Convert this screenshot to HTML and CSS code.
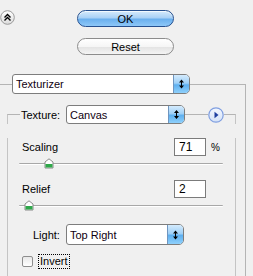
FILE: index.html
```html
<!DOCTYPE html>
<html>
<head>
<meta charset="utf-8">
<link rel="stylesheet" href="styles.css">
</head>
<body>
<div class="top">
  <div class="collapse">
    <svg width="15" height="15" viewBox="0 0 15 15">
      <defs><linearGradient id="cg" x1="0" y1="0" x2="0" y2="1"><stop offset="0" stop-color="#ffffff"/><stop offset="1" stop-color="#dcdcdc"/></linearGradient></defs>
      <circle cx="7.5" cy="7.5" r="6.8" fill="url(#cg)" stroke="#9a9a9a" stroke-width="1"/>
      <path d="M4.5 7.5 L7.5 4.5 L10.5 7.5 M4.5 10.5 L7.5 7.5 L10.5 10.5" fill="none" stroke="#000" stroke-width="1.4"/>
    </svg>
  </div>
  <div class="buttons">
    <div class="btn btn-ok">OK</div>
    <div class="btn btn-reset">Reset</div>
  </div>
</div>

<div class="outer">
  <div class="hdr outer-hdr">
    <div class="line line-left-short"></div>
    <div class="select sel-filter">
      <span class="sel-text">Texturizer</span>
      <span class="sel-arrow"><svg width="15" height="20" viewBox="0 0 15 20"><path d="M5 8.5 L7.5 5.5 L10 8.5 Z M5 11.5 L7.5 14.5 L10 11.5 Z" fill="#000"/><rect x="7" y="8" width="1" height="4" fill="#000"/></svg></span>
    </div>
    <div class="line line-right-outer"></div>
  </div>
  <div class="outer-body">
    <div class="hdr inner-hdr">
      <div class="line line-left-inner"></div>
      <span class="lbl tex-lbl">Texture:</span>
      <div class="select sel-texture">
        <span class="sel-text">Canvas</span>
        <span class="sel-arrow"><svg width="15" height="19" viewBox="0 0 15 19"><path d="M5 8 L7.5 5 L10 8 Z M5 11 L7.5 14 L10 11 Z" fill="#000"/><rect x="7" y="7.5" width="1" height="4" fill="#000"/></svg></span>
      </div>
      <div class="line line-mid"></div>
      <div class="circle-btn">
        <svg width="16" height="16" viewBox="0 0 16 16">
          <defs><linearGradient id="bg2" x1="0" y1="0" x2="0" y2="1"><stop offset="0" stop-color="#f4f8ff"/><stop offset="1" stop-color="#d4e2f8"/></linearGradient></defs>
          <circle cx="8" cy="8" r="7.2" fill="url(#bg2)" stroke="#7f9ee0" stroke-width="1.2"/>
          <path d="M6.5 4.8 L10.5 8 L6.5 11.2 Z" fill="#1f3fa0"/>
        </svg>
      </div>
      <div class="line line-right-inner"></div>
    </div>
    <div class="inner-body">
      <div class="row row-scaling">
        <span class="lbl grow">Scaling</span>
        <div class="num">71</div>
        <span class="lbl pct">%</span>
      </div>
      <div class="slider">
        <div class="track"></div>
        <svg class="thumb" style="left: 25px" width="10" height="11" viewBox="0 0 10 11"><path d="M1 4 L5 0.8 L9 4 L9 10 L1 10 Z" fill="#ffffff" stroke="#8a8a8a" stroke-width="1"/><rect x="1.5" y="6" width="7" height="3.5" fill="#2fa84a"/></svg>
      </div>
      <div class="row row-relief">
        <span class="lbl grow">Relief</span>
        <div class="num">2</div>
        <span class="lbl pct"></span>
      </div>
      <div class="slider slider2">
        <div class="track"></div>
        <svg class="thumb" style="left: 5px" width="10" height="11" viewBox="0 0 10 11"><path d="M1 4 L5 0.8 L9 4 L9 10 L1 10 Z" fill="#ffffff" stroke="#8a8a8a" stroke-width="1"/><rect x="1.5" y="6" width="7" height="3.5" fill="#2fa84a"/></svg>
      </div>
      <div class="row row-light">
        <span class="lbl light-lbl">Light:</span>
        <div class="select sel-light">
          <span class="sel-text">Top Right</span>
          <span class="sel-arrow"><svg width="15" height="20" viewBox="0 0 15 20"><path d="M5 8.5 L7.5 5.5 L10 8.5 Z M5 11.5 L7.5 14.5 L10 11.5 Z" fill="#000"/><rect x="7" y="8" width="1" height="4" fill="#000"/></svg></span>
        </div>
      </div>
      <div class="row row-check">
        <span class="checkbox"></span>
        <span class="lbl focus">Invert</span>
      </div>
    </div>
  </div>
</div>
</body>
</html>
```

FILE: styles.css
```css
html, body {
  margin: 0;
  padding: 0;
  background: #f0f0f0;
  width: 253px;
  height: 276px;
  overflow: hidden;
  font-family: "Liberation Sans", Arial, sans-serif;
  font-size: 11px;
  color: #000;
}

.top {
  display: flex;
  align-items: flex-start;
  padding-top: 10px;
  height: 74px;
  box-sizing: border-box;
}

.collapse {
  width: 15px;
  height: 15px;
  line-height: 0;
}

.buttons {
  margin-left: 62px;
  display: flex;
  flex-direction: column;
  gap: 11px;
}

.btn {
  width: 97px;
  height: 17px;
  box-sizing: border-box;
  border-radius: 9px;
  display: flex;
  align-items: center;
  justify-content: center;
  font-size: 11px;
}

.btn-ok {
  border: 1px solid #26508f;
  background: linear-gradient(to bottom, #d6ebfc 0%, #a9d1f6 45%, #6bb0ee 55%, #8ec8f8 100%);
  box-shadow: inset 0 1px 0 rgba(255,255,255,0.7);
}

.btn-reset {
  border: 1px solid #8c8c8c;
  background: linear-gradient(to bottom, #ffffff 0%, #f6f6f6 50%, #e4e4e4 55%, #f4f4f4 100%);
}

.hdr {
  display: flex;
  align-items: stretch;
}

.line {
  align-self: flex-end;
  height: 10px;
  border-top: 1px solid #b4b4b4;
  box-sizing: border-box;
}

.outer {
  width: 246px;
}

.outer-hdr {
  height: 20px;
}

.line-left-short {
  width: 12px;
}

.line-right-outer {
  flex: 1;
  border-right: 1px solid #b4b4b4;
}

.select {
  display: flex;
  box-sizing: border-box;
  border: 1px solid #7d7d7d;
  border-radius: 3px 5px 5px 3px;
  background: #fff;
  overflow: hidden;
}

.sel-text {
  flex: 1;
  display: flex;
  align-items: center;
  padding-left: 3px;
  color: #100010;
}

.sel-arrow {
  width: 15px;
  display: flex;
  align-items: center;
  justify-content: center;
  background: linear-gradient(to bottom, #d4ebfd 0%, #9fd0f7 45%, #5eb0f0 55%, #8fd0fb 100%);
  border-left: 1px solid #6f95bf;
  line-height: 0;
}

.sel-filter {
  width: 178px;
  height: 20px;
}

.outer-body {
  border-right: 1px solid #b4b4b4;
  padding: 11px 9px 0 7px;
  height: 182px;
  box-sizing: border-box;
}

.inner-hdr {
  height: 19px;
}

.line-left-inner {
  width: 13px;
  border-left: 1px solid #c4c4c4;
}

.tex-lbl {
  display: flex;
  align-items: center;
  width: 45px;
  padding-left: 1px;
}

.sel-texture {
  width: 119px;
  height: 19px;
}

.line-mid {
  width: 23px;
}

.circle-btn {
  width: 16px;
  display: flex;
  align-items: center;
  line-height: 0;
}

.line-right-inner {
  flex: 1;
  border-right: 1px solid #c4c4c4;
}

.inner-body {
  border-left: 1px solid #c4c4c4;
  border-right: 1px solid #c4c4c4;
  padding: 0 12px 0 11px;
  height: 152px;
  box-sizing: border-box;
}

.row {
  display: flex;
  align-items: center;
}

.grow {
  flex: 1;
  padding-left: 3px;
}

.row-scaling {
  margin-top: 14px;
  height: 18px;
}

.num {
  width: 32px;
  height: 18px;
  box-sizing: border-box;
  border: 1px solid #7b7b7b;
  background: #fff;
  padding: 1px 0 0 4px;
  font-size: 12px;
}

.pct {
  width: 12px;
  padding-left: 5px;
  font-size: 10px;
}

.slider {
  position: relative;
  height: 14px;
}

.track {
  position: absolute;
  left: 0;
  right: 0;
  top: 7px;
  height: 2px;
  border-top: 1px solid #a8a8a8;
  border-bottom: 1px solid #ffffff;
  border-radius: 1px;
  box-sizing: border-box;
}

.thumb {
  position: absolute;
  top: 2px;
}

.row-relief {
  margin-top: 10px;
  height: 18px;
}

.slider2 {
  height: 14px;
}

.row-light {
  margin-top: 12px;
  height: 21px;
}

.light-lbl {
  margin-left: 14px;
  width: 33px;
}

.sel-light {
  width: 118px;
  height: 21px;
}

.row-check {
  margin-top: 9px;
  height: 15px;
  padding-left: 3px;
}

.checkbox {
  width: 11px;
  height: 11px;
  box-sizing: border-box;
  border: 1px solid #8d8d8d;
  border-radius: 2px;
  background: linear-gradient(to bottom, #e8e8e8, #ffffff);
}

.focus {
  margin-left: 5px;
  border: 1px dotted #000;
  padding: 0 1px;
  line-height: 13px;
}
```
